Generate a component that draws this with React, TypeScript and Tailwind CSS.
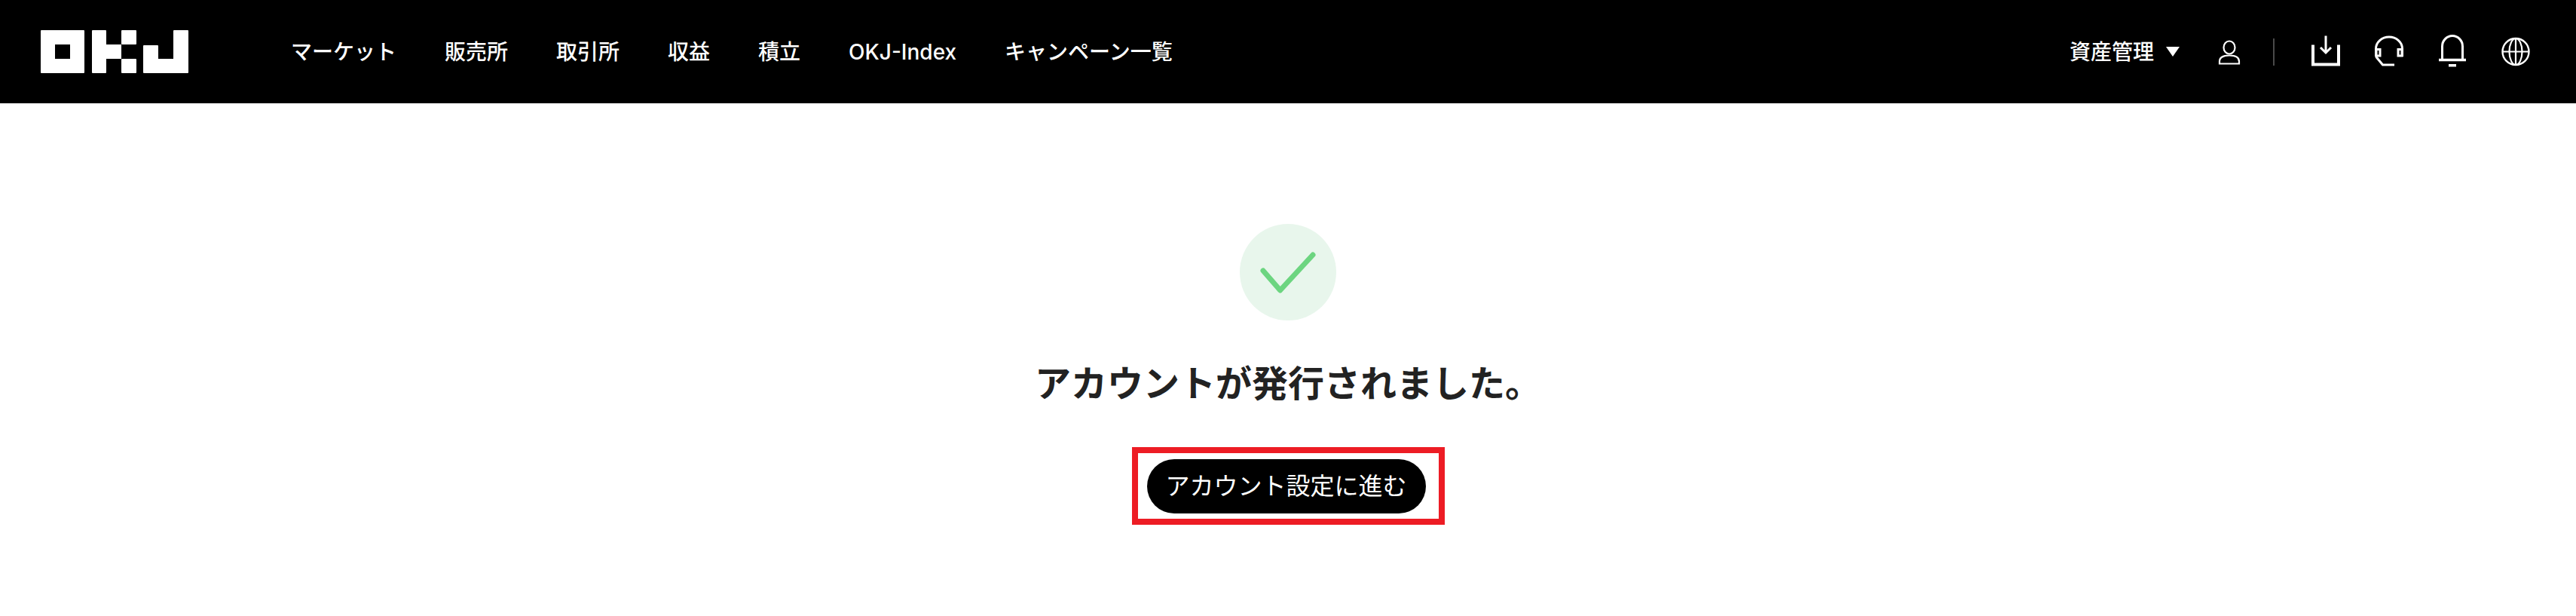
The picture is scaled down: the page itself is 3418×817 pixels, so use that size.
const font = { fontFamily: '"Inter", "Noto Sans CJK JP", sans-serif' };

function Logo() {
  return (
    <svg width="196" height="57" viewBox="0 0 196 57" fill="#fff" className="shrink-0">
      <path fillRule="evenodd" d="M1 0H57a1 1 0 0 1 1 1V56a1 1 0 0 1-1 1H1a1 1 0 0 1-1-1V1a1 1 0 0 1 1-1ZM19 19V38H39V19Z" />
      <path d="M69 0H86a1 1 0 0 1 1 1V19H107V38H87V56a1 1 0 0 1-1 1H69a1 1 0 0 1-1-1V1a1 1 0 0 1 1-1Z" />
      <rect x="107" y="0" width="20" height="19" rx="1" />
      <rect x="107" y="38" width="20" height="19" rx="1" />
      <path d="M137 20H155a1 1 0 0 1 1 1V38H176V1a1 1 0 0 1 1-1H195a1 1 0 0 1 1 1V56a1 1 0 0 1-1 1H137a1 1 0 0 1-1-1V21a1 1 0 0 1 1-1Z" />
    </svg>
  );
}

function IconBox({ children }: { children: React.ReactNode }) {
  return (
    <svg width="48" height="48" viewBox="0 0 48 48" fill="none" stroke="#fff" className="shrink-0">
      {children}
    </svg>
  );
}

const navItems = ['マーケット', '販売所', '取引所', '収益', '積立', 'OKJ-Index', 'キャンペーン一覧'];

export default function App() {
  return (
    <div className="min-h-[817px] bg-white" style={font}>
      <header className="flex h-[137px] items-center bg-black pl-[54px] pr-[56px] text-white">
        <Logo />
        <nav className="ml-[136px] flex items-center gap-[64px] text-[28px] font-medium leading-[40px]">
          {navItems.map((t) => (
            <span key={t} className="whitespace-nowrap">{t}</span>
          ))}
        </nav>
        <div className="ml-auto flex items-center">
          <span className="text-[28px] font-medium leading-[40px]">資産管理</span>
          <svg width="18" height="13" viewBox="0 0 18 13" fill="#fff" className="ml-[16px]">
            <path d="M0 0H18L9 13Z" />
          </svg>
          <div className="ml-[42px]">
            <IconBox>
              <ellipse cx="24" cy="18" rx="7.5" ry="8.5" strokeWidth="2.2" />
              <path d="M11 39.5H37V36.5C37 31 32 28.5 24 28.5C16 28.5 11 31 11 36.5Z" strokeWidth="2.2" />
            </IconBox>
          </div>
          <div className="ml-[34px] h-[36px] w-[2px] bg-[#4a4a4a]" />
          <div className="ml-[44px] flex items-center gap-[36px]">
            <IconBox>
              <path d="M7 14.5V40.5H41V14.5" strokeWidth="4" />
              <path d="M24 2.5V25M17 18L24 25L31 18" strokeWidth="3" />
            </IconBox>
            <IconBox>
              <path d="M6.5 30V19.5A17.5 15.5 0 0 1 41.5 19.5V30" strokeWidth="3" />
              <path d="M7 20.5H12V29H7ZM36 20.5H41V29H36Z" strokeWidth="3" />
              <path d="M6.5 30L15.5 41H31" strokeWidth="3" />
            </IconBox>
            <IconBox>
              <path d="M10.5 34V16.5A13.5 14 0 0 1 37.5 16.5V34" strokeWidth="3" />
              <path d="M6 34.5H42" strokeWidth="3.5" />
              <rect x="19" y="40" width="10" height="3.5" fill="#fff" stroke="none" />
            </IconBox>
            <IconBox>
              <circle cx="24" cy="23.5" r="17.5" strokeWidth="2.4" />
              <ellipse cx="24" cy="23.5" rx="8.5" ry="17.5" strokeWidth="2.2" />
              <path d="M24 6V41M6.5 23.5H41.5" strokeWidth="2.2" />
            </IconBox>
          </div>
        </div>
      </header>
      <main className="flex flex-col items-center pt-[160px]">
        <div className="flex h-[128px] w-[128px] items-center justify-center rounded-full bg-[#e8f6ec]">
          <svg width="128" height="128" viewBox="0 0 128 128" fill="none">
            <path d="M31 62L53.6 88L97 41" stroke="#6cd580" strokeWidth="7" strokeLinecap="round" strokeLinejoin="round" />
          </svg>
        </div>
        <h1 className="mt-[56px] text-[48px] font-bold leading-[56px] text-[#222222]">アカウントが発行されました。</h1>
        <div className="mt-[56px] border-[8px] border-[#ed1c24] pb-[7px] pl-3 pr-[17px] pt-2">
          <button className="flex h-[72px] w-[370px] items-center justify-center rounded-full bg-black text-[32px] leading-[40px] text-white">
            アカウント設定に進む
          </button>
        </div>
      </main>
    </div>
  );
}
